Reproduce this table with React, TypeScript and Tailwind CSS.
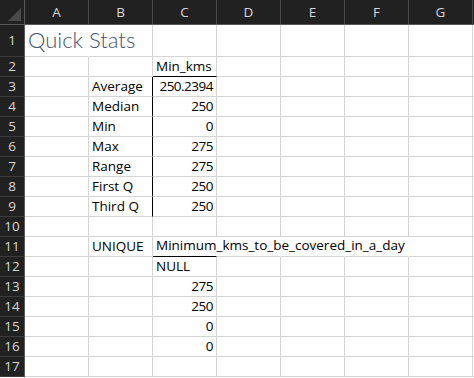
import React from "react";

const FONT = { fontFamily: "'Open Sans', 'Noto Sans', sans-serif" };

const cols = ["A", "B", "C", "D", "E", "F", "G"];

const stats: [string, string][] = [
  ["Average", "250.2394"],
  ["Median", "250"],
  ["Min", "0"],
  ["Max", "275"],
  ["Range", "275"],
  ["First Q", "250"],
  ["Third Q", "250"],
];

function GridCell({
  children,
  right = "gray",
  bottom = "gray",
  align = "l",
}: {
  children?: React.ReactNode;
  right?: "gray" | "black" | "none";
  bottom?: "gray" | "black";
  align?: "l" | "r";
}) {
  const r =
    right === "black"
      ? "border-r border-r-black"
      : right === "none"
      ? "border-r border-r-white"
      : "border-r border-r-[#d4d4d4]";
  const b = bottom === "black" ? "border-b border-b-black" : "border-b border-b-[#d4d4d4]";
  return (
    <div
      className={`relative w-[64px] shrink-0 h-full ${r} ${b} flex items-end ${
        align === "r" ? "justify-end pr-[3px]" : "justify-start pl-[3px]"
      }`}
    >
      {children}
    </div>
  );
}

function Row({ n, h, cells }: { n: number; h: string; cells: React.ReactNode }) {
  return (
    <div className={`flex ${h}`}>
      <div className="w-[25px] shrink-0 h-full bg-[#212121] border-r border-r-[#5a5a5a] border-b border-b-[#3c3c3c] flex items-center justify-center text-[13.5px] text-[#d6d6d6] leading-none pt-[1px]">
        {n}
      </div>
      {cells}
    </div>
  );
}

function Txt({ children, num = false }: { children: React.ReactNode; num?: boolean }) {
  return (
    <span
      className={`whitespace-nowrap text-[13.5px] leading-[19px] text-black ${
        num ? "tracking-[-0.5px]" : ""
      }`}
    >
      {children}
    </span>
  );
}

function Blank({ from }: { from: number }) {
  return (
    <>
      {cols.slice(from).map((c) => (
        <GridCell key={c} />
      ))}
      <GridCell />
    </>
  );
}

export default function App() {
  const rows: React.ReactNode[] = [];

  rows.push(
    <Row
      key={1}
      n={1}
      h="h-[32px]"
      cells={
        <>
          <GridCell right="none">
            <span
              className="absolute left-[3px] bottom-[5px] whitespace-nowrap text-[22px] leading-none text-[#44546a] font-light z-10"
              style={{ fontFamily: "Lato, 'Open Sans', sans-serif" }}
            >
              Quick Stats
            </span>
          </GridCell>
          <Blank from={1} />
        </>
      }
    />
  );

  rows.push(
    <Row
      key={2}
      n={2}
      h="h-[20px]"
      cells={
        <>
          <GridCell />
          <GridCell />
          <GridCell bottom="black">
            <Txt>Min_kms</Txt>
          </GridCell>
          <Blank from={3} />
        </>
      }
    />
  );

  stats.forEach(([label, val], i) => {
    const n = i + 3;
    rows.push(
      <Row
        key={n}
        n={n}
        h="h-[20px]"
        cells={
          <>
            <GridCell />
            <GridCell right="black">
              <Txt>{label}</Txt>
            </GridCell>
            <GridCell align="r">
              <Txt num>{val}</Txt>
            </GridCell>
            <Blank from={3} />
          </>
        }
      />
    );
  });

  rows.push(<Row key={10} n={10} h="h-[20px]" cells={<Blank from={0} />} />);

  rows.push(
    <Row
      key={11}
      n={11}
      h="h-[20px]"
      cells={
        <>
          <GridCell />
          <GridCell>
            <Txt>UNIQUE</Txt>
          </GridCell>
          <GridCell bottom="black" right="none">
            <span className="absolute left-[3px] bottom-0 z-10">
              <Txt>Minimum_kms_to_be_covered_in_a_day</Txt>
            </span>
          </GridCell>
          <GridCell right="none" />
          <GridCell right="none" />
          <GridCell right="none" />
          <GridCell />
          <GridCell />
        </>
      }
    />
  );

  rows.push(
    <Row
      key={12}
      n={12}
      h="h-[20px]"
      cells={
        <>
          <GridCell />
          <GridCell />
          <GridCell>
            <Txt>NULL</Txt>
          </GridCell>
          <Blank from={3} />
        </>
      }
    />
  );

  ["275", "250", "0", "0"].forEach((v, i) => {
    const n = 13 + i;
    rows.push(
      <Row
        key={n}
        n={n}
        h="h-[20px]"
        cells={
          <>
            <GridCell />
            <GridCell />
            <GridCell align="r">
              <Txt num>{v}</Txt>
            </GridCell>
            <Blank from={3} />
          </>
        }
      />
    );
  });

  rows.push(<Row key={17} n={17} h="h-[20px]" cells={<Blank from={0} />} />);

  return (
    <div className="w-[474px] h-[378px] overflow-hidden bg-white" style={FONT}>
      <div className="flex h-[25px] bg-[#212121] border-b border-b-[#5a5a5a]">
        <div className="relative w-[25px] shrink-0 h-full border-r border-r-[#5a5a5a]">
          <svg className="absolute right-[3px] bottom-[3px]" width="13" height="13" viewBox="0 0 13 13">
            <polygon points="13,0 13,13 0,13" fill="#4a4a4a" />
          </svg>
        </div>
        {cols.map((c) => (
          <div
            key={c}
            className="w-[64px] shrink-0 h-full border-r border-r-[#4a4a4a] flex items-center justify-center text-[13.5px] text-[#d6d6d6] leading-none pt-[2px]"
          >
            {c}
          </div>
        ))}
        <div className="w-[64px] shrink-0 h-full" />
      </div>
      {rows}
    </div>
  );
}
